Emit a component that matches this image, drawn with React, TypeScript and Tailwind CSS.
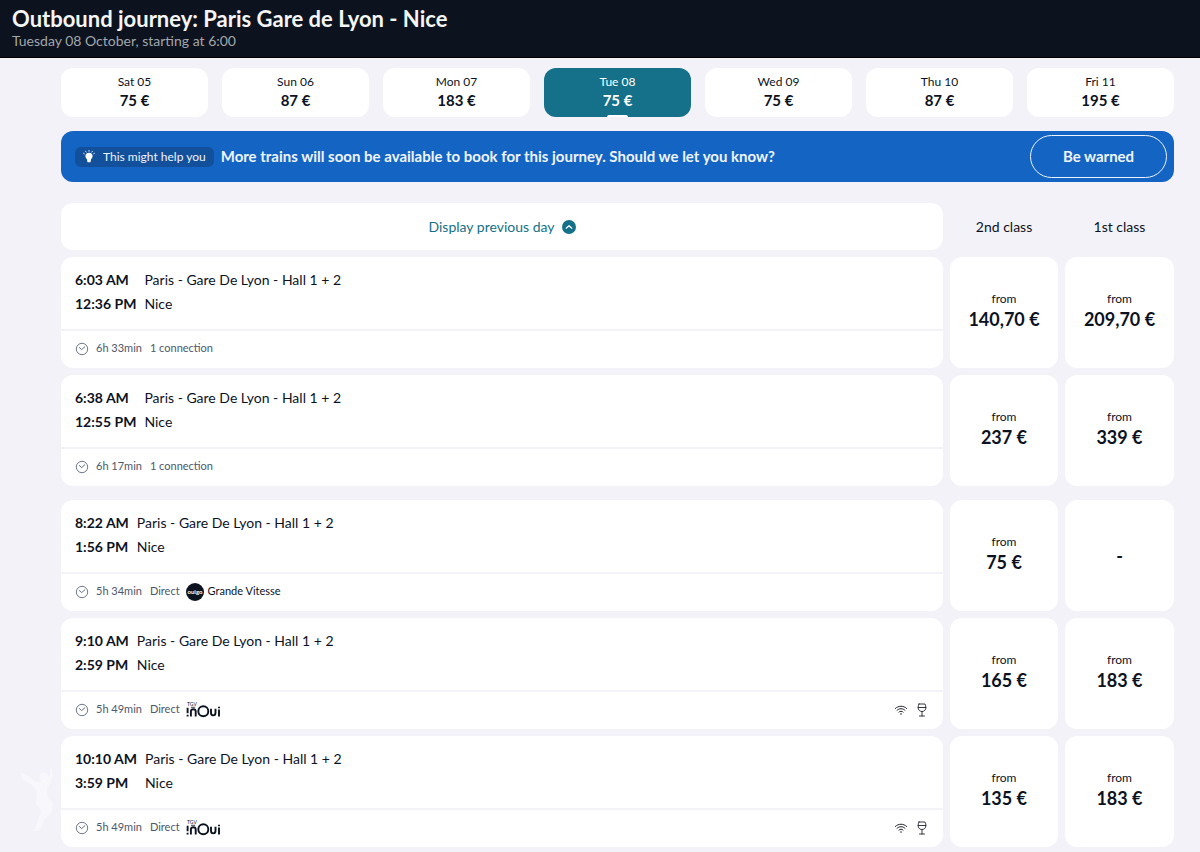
import clsx from "clsx";

type Day = {
  label: string;
  price: string;
  selected?: boolean;
};

type Trip = {
  departure: string;
  arrival: string;
  duration: string;
  stops: string;
  carrier?: "ouigo" | "inoui";
  second: string | null;
  first: string | null;
};

const days: Day[] = [
  { label: "Sat 05", price: "75 €" },
  { label: "Sun 06", price: "87 €" },
  { label: "Mon 07", price: "183 €" },
  { label: "Tue 08", price: "75 €", selected: true },
  { label: "Wed 09", price: "75 €" },
  { label: "Thu 10", price: "87 €" },
  { label: "Fri 11", price: "195 €" },
];

// trips are grouped by departure period
const tripGroups: Trip[][] = [
  [
    { departure: "6:03 AM", arrival: "12:36 PM", duration: "6h 33min", stops: "1 connection", second: "140,70 €", first: "209,70 €" },
    { departure: "6:38 AM", arrival: "12:55 PM", duration: "6h 17min", stops: "1 connection", second: "237 €", first: "339 €" },
  ],
  [
    { departure: "8:22 AM", arrival: "1:56 PM", duration: "5h 34min", stops: "Direct", carrier: "ouigo", second: "75 €", first: null },
    { departure: "9:10 AM", arrival: "2:59 PM", duration: "5h 49min", stops: "Direct", carrier: "inoui", second: "165 €", first: "183 €" },
    { departure: "10:10 AM", arrival: "3:59 PM", duration: "5h 49min", stops: "Direct", carrier: "inoui", second: "135 €", first: "183 €" },
  ],
];

function ClockIcon() {
  return (
    <svg viewBox="0 0 14 14" className="size-[14px]" fill="none" stroke="#5f6b80" aria-hidden="true">
      <circle cx="7" cy="7" r="5.7" strokeWidth="0.9" />
      <path d="M4.4 5.6 6.6 7.6 9.8 4.8" strokeWidth="1" strokeLinecap="round" strokeLinejoin="round" />
    </svg>
  );
}

function BulbIcon() {
  return (
    <svg viewBox="0 0 12 13" className="h-[13px] w-3" aria-hidden="true">
      <path d="M6 2.8c2.200 0 3.600 1.400 3.600 3.300 0 1.400-.8 2.200-1.500 3.100L7.500 12.200H4.500L3.900 9.200C3.200 8.300 2.400 7.500 2.400 6.100c0-1.900 1.400-3.300 3.600-3.300Z" fill="#fff" />
      <path d="M6 .4v1M2.600 1.200l.6.900M9.400 1.200l-.6.900M.5 3.300l.9.500M11.500 3.300l-.9.500" stroke="#fff" strokeWidth=".8" strokeLinecap="round" />
    </svg>
  );
}

function ChevronUpIcon() {
  return (
    <svg viewBox="0 0 14 14" className="size-[14px]" aria-hidden="true">
      <circle cx="7" cy="7" r="7" fill="#15718a" />
      <path d="M4.200 8.200 7 5.700l2.800 2.500" fill="none" stroke="#fff" strokeWidth="1.200" strokeLinecap="round" strokeLinejoin="round" />
    </svg>
  );
}

function WifiIcon() {
  return (
    <svg viewBox="0 0 14 12" className="h-3 w-[14px]" fill="none" stroke="#20242c" strokeLinecap="round" role="img" aria-label="Wifi on board">
      <path d="M1.300 4.500C4.500 1.400 9.500 1.400 12.700 4.500" strokeWidth="1" />
      <path d="M3 6.300c2.300-2.200 5.700-2.200 8 0" strokeWidth="1" />
      <path d="M4.900 8.100c1.200-1.200 3-1.200 4.200 0" strokeWidth="1" />
      <circle cx="7" cy="10" r=".8" fill="#20242c" stroke="none" />
    </svg>
  );
}

function GlassIcon() {
  return (
    <svg viewBox="0 0 10 14" className="h-[14px] w-[10px]" fill="none" stroke="#20242c" strokeLinecap="round" strokeLinejoin="round" role="img" aria-label="Bar on board">
      <path d="M2 1h6c.6 1.200.9 2.400.9 3.500C8.900 6.900 7.300 8.500 5 8.500S1.100 6.900 1.100 4.500C1.100 3.400 1.400 2.200 2 1Z" strokeWidth=".9" />
      <path d="M1.200 4.500h7.600M5 8.500V13M2.500 13h5" strokeWidth=".9" />
    </svg>
  );
}

function OuigoLogo() {
  return (
    <svg viewBox="0 0 18 18" className="size-[18px]" role="img" aria-label="Ouigo">
      <circle cx="9" cy="9" r="9" fill="#0c131f" />
      <text x="9" y="11" textAnchor="middle" fontFamily="Lato, sans-serif" fontWeight="700" fontSize="6" fill="#fff">
        ouigo
      </text>
    </svg>
  );
}

function InouiLogo() {
  return (
    <svg viewBox="0 0 35 16" className="h-4 w-[35px]" fill="none" stroke="#0c131f" role="img" aria-label="TGV inOui">
      <text x="1" y="4" fontFamily="Lato, sans-serif" fontWeight="400" fontSize="5" fill="#0c131f" stroke="none">
        TGV
      </text>
      <path d="M1.600 5.800v5.500M1.600 12.700v1.700" strokeWidth="1.900" />
      <path d="M4.900 14.400V9.600c0-1.600 1-2.400 2.400-2.400s2.400.8 2.400 2.400v4.800" strokeWidth="1.900" />
      <path d="M5 5.300h4.200" strokeWidth=".8" />
      <circle cx="17.300" cy="9.300" r="5" strokeWidth="1.900" />
      <path d="M25 6.800v4c0 1.700.9 2.600 2.200 2.600s2.300-.9 2.300-2.600v-4" strokeWidth="1.900" />
      <path d="M33 7.500v6.900M33 4.700v1.500" strokeWidth="1.900" />
    </svg>
  );
}

function Watermark() {
  return (
    <svg viewBox="0 0 34 64" className="absolute top-[767px] left-5 h-16 w-[34px]" fill="#fff" fillOpacity=".4" aria-hidden="true">
      <circle cx="23.500" cy="10" r="4.500" />
      <path d="M0 5 8 9l8 6 6-1 5-2 3-4 0-6 2 0 1 8-4 8-2 5 1 7 5 6-1 9-8 8-3 8-5 6-3-1 4-10 4-12-5-7 1-12-5-7-9-5Z" />
    </svg>
  );
}

function DayCard({ label, price, selected }: Day) {
  return (
    <button
      type="button"
      aria-pressed={!!selected}
      className={clsx(
        "flex h-[49px] flex-col items-center rounded-xl pt-1",
        selected ? "bg-[#15718a] text-white" : "bg-white text-[#0c131f]",
      )}
    >
      <span className="text-xs leading-5">{label}</span>
      <span className="text-[15px] leading-4 font-bold">{price}</span>
      {selected && <span className="mt-auto h-[2px] w-[21px] rounded-t-sm bg-white" />}
    </button>
  );
}

function PriceCard({ price }: { price: string | null }) {
  if (!price) {
    return <div className="flex items-center justify-center rounded-xl bg-white text-lg font-bold">-</div>;
  }
  return (
    <button type="button" className="flex flex-col items-center justify-center rounded-xl bg-white pb-[3px]">
      <span className="text-xs leading-4">from</span>
      <span className="text-lg leading-6 font-bold">{price}</span>
    </button>
  );
}

function TripRow({ trip }: { trip: Trip }) {
  return (
    <article className="grid h-[111px] grid-cols-[1fr_108px_109px] gap-[7px]">
      <div className="flex flex-col rounded-xl bg-white">
        <div className="grid h-[74px] grid-cols-[auto_1fr] content-start gap-x-2 border-b-2 border-[#f3f2f8] px-[14px] pt-[11px] text-sm leading-6">
          <span className="font-bold">{trip.departure}</span>
          <span>Paris - Gare De Lyon - Hall 1 + 2</span>
          <span className="font-bold">{trip.arrival}</span>
          <span>Nice</span>
        </div>
        <div className="flex flex-1 items-center px-[14px] pb-[2px] text-[11px] text-[#4d586c]">
          <ClockIcon />
          <span className="ml-[7px]">{trip.duration}</span>
          <span className="mr-[6px] ml-2">{trip.stops}</span>
          {trip.carrier === "ouigo" && (
            <>
              <OuigoLogo />
              <span className="ml-1 text-[#0c131f]">Grande Vitesse</span>
            </>
          )}
          {trip.carrier === "inoui" && (
            <>
              <InouiLogo />
              <span className="mr-[2px] ml-auto flex items-center gap-[9px]">
                <WifiIcon />
                <GlassIcon />
              </span>
            </>
          )}
        </div>
      </div>
      <PriceCard price={trip.second} />
      <PriceCard price={trip.first} />
    </article>
  );
}

export default function App() {
  return (
    <div className="relative min-h-screen bg-[#f3f2f8] font-[Lato,sans-serif] text-[#0c131f]">
      <header className="h-[58px] border-b border-black bg-[#0c131f] px-3 pt-[5px]">
        <h1 className="text-[22px] leading-7 font-bold text-[#f5f5f5]">Outbound journey: Paris Gare de Lyon - Nice</h1>
        <p className="text-sm leading-4 text-[#a3a6ab]">Tuesday 08 October, starting at 6:00</p>
      </header>

      <main className="pt-[10px] pr-[26px] pb-[5px] pl-[61px]">
        <nav aria-label="Days" className="grid grid-cols-7 gap-[14px]">
          {days.map((day) => (
            <DayCard key={day.label} {...day} />
          ))}
        </nav>

        <section className="mt-[14px] flex h-[51px] items-center rounded-xl bg-[#1464c4] pr-[7px] pl-[14px] text-[#eef4ff]">
          <span className="flex h-5 items-center gap-2 rounded-md bg-[#13509c] px-2 text-xs">
            <BulbIcon />
            This might help you
          </span>
          <p className="ml-[7px] text-[15px] font-bold">
            More trains will soon be available to book for this journey. Should we let you know?
          </p>
          <button type="button" className="ml-auto h-[43px] w-[137px] rounded-full border border-[#eef4ff] text-[15px] font-bold">
            Be warned
          </button>
        </section>

        <div className="mt-[21px] mb-[7px] grid h-[47px] grid-cols-[1fr_108px_109px] items-center gap-[7px] text-sm">
          <button type="button" className="flex h-full items-center justify-center gap-[7px] rounded-xl bg-white text-[#15718a]">
            Display previous day
            <ChevronUpIcon />
          </button>
          <span className="text-center">2nd class</span>
          <span className="text-center">1st class</span>
        </div>

        <div className="flex flex-col gap-[14px]">
          {tripGroups.map((trips, i) => (
            <div key={i} className="flex flex-col gap-[7px]">
              {trips.map((trip) => (
                <TripRow key={trip.departure} trip={trip} />
              ))}
            </div>
          ))}
        </div>
      </main>

      <Watermark />
    </div>
  );
}
